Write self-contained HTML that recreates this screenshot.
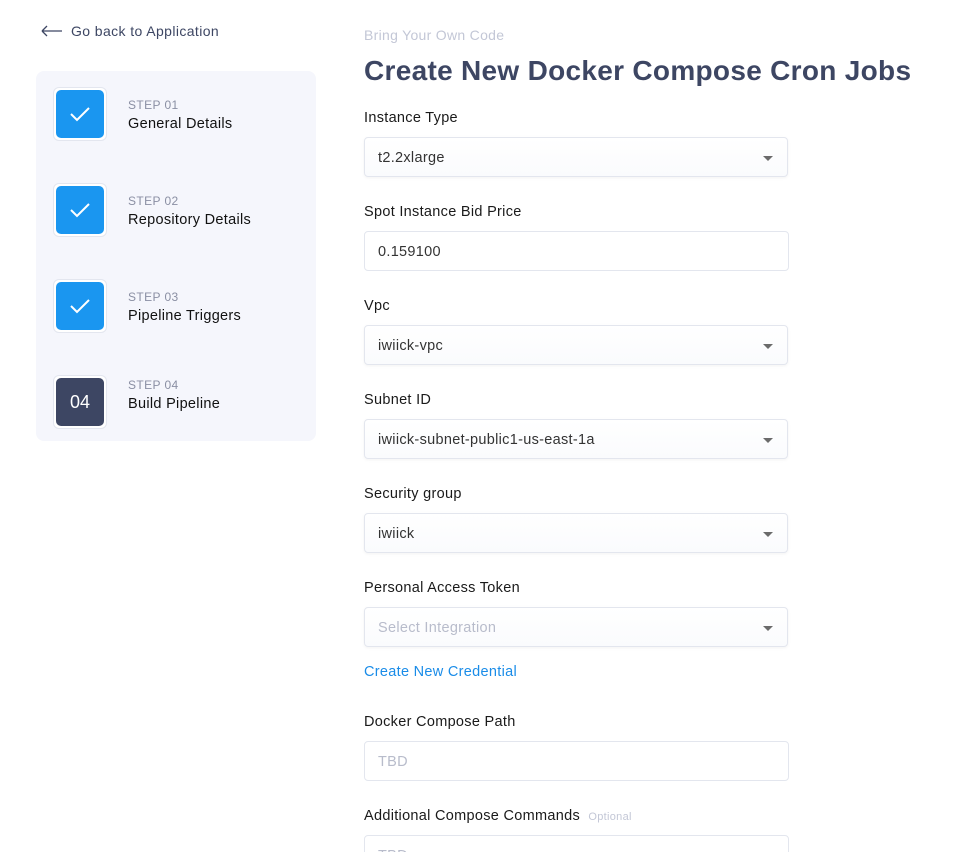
<!DOCTYPE html>
<html><head><meta charset="utf-8"><style>
*{box-sizing:border-box;margin:0;padding:0}
body{width:961px;height:852px;overflow:hidden;background:#fff;font-family:"Liberation Sans",sans-serif;position:relative;color:#1a1a1a}
.a{position:absolute}
.back{left:41px;top:23px;font-size:14px;color:#3d4663;letter-spacing:.4px}
.panel{left:36px;top:71px;width:280px;height:370px;background:#f5f6fc;border-radius:8px}
.ic{left:53px;width:54px;height:54px;border:1px solid #e3e6ef;background:#fff;border-radius:6px;padding:2px}
.ic div{width:48px;height:48px;border-radius:5px;background:#1a96f0;display:flex;align-items:center;justify-content:center;color:#fff;font-size:18px}
.st{left:128px;font-size:12px;color:#8a8fa3;letter-spacing:.4px}
.sn{left:128px;font-size:14.5px;color:#111;letter-spacing:.3px}
.sub{left:364px;top:27px;font-size:14px;color:#c3c7d6;letter-spacing:.3px}
.title{left:364px;top:55px;font-size:28px;font-weight:bold;color:#3d4663;white-space:nowrap;letter-spacing:.3px}
.clip{left:0;top:112px;width:961px;height:740px;overflow:hidden}
.lbl{left:364px;font-size:14.5px;color:#1a1a1a;letter-spacing:.3px}
.box{left:364px;width:424px;height:40px;border:1px solid #e3e6ee;border-radius:4px;background:#fff;font-size:14.5px;padding:12px 13px 0;color:#333;letter-spacing:.3px}
.sel{background:linear-gradient(#fff,#fafbfd);box-shadow:0 1px 3px rgba(0,0,0,.05)}
.sel:after{content:"";position:absolute;right:14px;top:18px;border-left:5px solid transparent;border-right:5px solid transparent;border-top:5px solid #6b6b6b}
.inp{width:425px}
.ph{color:#b8bccb}
</style></head><body>
<div class="a back"><svg width="22" height="12" style="vertical-align:-1px;margin-right:8px"><path d="M1 6H21M1 6L6 1M1 6L6 11" stroke="#3d4663" stroke-width="1.3" fill="none"/></svg>Go back to Application</div>
<div class="a panel"></div>
<div class="a ic" style="top:87px"><div><svg width="22" height="16"><path d="M2 8L8 14L20 2" stroke="#fff" stroke-width="2" fill="none"/></svg></div></div>
<div class="a st" style="top:98px">STEP 01</div><div class="a sn" style="top:116px">General Details</div>
<div class="a ic" style="top:183px"><div><svg width="22" height="16"><path d="M2 8L8 14L20 2" stroke="#fff" stroke-width="2" fill="none"/></svg></div></div>
<div class="a st" style="top:194px">STEP 02</div><div class="a sn" style="top:212px">Repository Details</div>
<div class="a ic" style="top:279px"><div><svg width="22" height="16"><path d="M2 8L8 14L20 2" stroke="#fff" stroke-width="2" fill="none"/></svg></div></div>
<div class="a st" style="top:290px">STEP 03</div><div class="a sn" style="top:308px">Pipeline Triggers</div>
<div class="a ic" style="top:375px"><div style="background:#3d4663">04</div></div>
<div class="a st" style="top:378px">STEP 04</div><div class="a sn" style="top:396px">Build Pipeline</div>
<div class="a sub">Bring Your Own Code</div>
<div class="a title">Create New Docker Compose Cron Jobs</div>
<div class="a clip">
<div class="a lbl" style="top:-2px">Instance Type</div>
<div class="a box sel" style="top:25px">t2.2xlarge</div>
<div class="a lbl" style="top:92px">Spot Instance Bid Price</div>
<div class="a box inp" style="top:119px">0.159100</div>
<div class="a lbl" style="top:186px">Vpc</div>
<div class="a box sel" style="top:213px">iwiick-vpc</div>
<div class="a lbl" style="top:280px">Subnet ID</div>
<div class="a box sel" style="top:307px">iwiick-subnet-public1-us-east-1a</div>
<div class="a lbl" style="top:374px">Security group</div>
<div class="a box sel" style="top:401px">iwiick</div>
<div class="a lbl" style="top:468px">Personal Access Token</div>
<div class="a box sel ph" style="top:495px">Select Integration</div>
<div class="a lbl" style="top:552px;color:#1a8ce8">Create New Credential</div>
<div class="a lbl" style="top:602px">Docker Compose Path</div>
<div class="a box inp ph" style="top:629px">TBD</div>
<div class="a lbl" style="top:696px">Additional Compose Commands <span style="font-size:11px;color:#c3c7d6;margin-left:4px">Optional</span></div>
<div class="a box inp ph" style="top:723px">TBD</div>
</div>
</body></html>
